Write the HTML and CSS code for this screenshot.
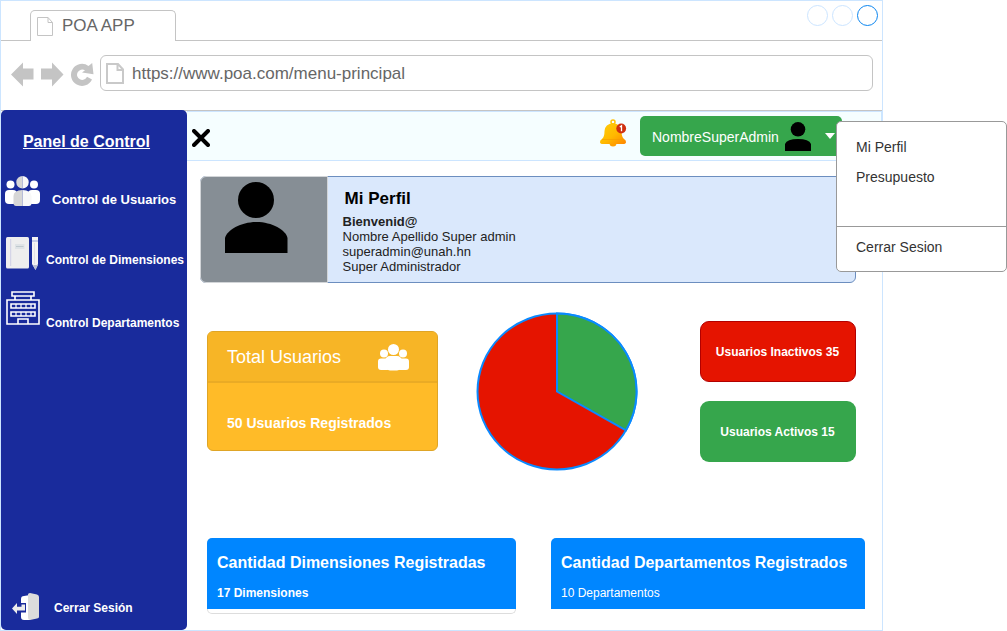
FILE: index.html
```html
<!DOCTYPE html>
<html lang="es">
<head>
<meta charset="utf-8">
<title>POA APP</title>
<link rel="stylesheet" href="styles.css">
</head>
<body>
<div class="window">
  <div class="tabstrip">
    <div class="tab">
      <svg width="16" height="19" viewBox="0 0 16 19" fill="none" stroke="#c4c4c4"><path d="M.5 .5H11L15.5 5.500V18.500H.5ZM11 .5V5.500H15.500"/></svg>
      <span class="tab-title">POA APP</span>
    </div>
    <div class="strip-rest">
      <i class="dot"></i><i class="dot"></i><i class="dot dot-active"></i>
    </div>
  </div>
  <div class="toolbar">
    <svg class="nav" width="83" height="26" viewBox="0 0 83 26" fill="#c4c4c4">
      <path d="M0 13.500 12 1.500V7.500H22.500V18.500H12V25.500Z"/>
      <path d="M52.500 13.500 41 1.500V7.500H30V18.500H41V25.500Z"/>
      <path d="M77.500 5A11 11 0 1 0 81 18.500L76 15.800A5.200 5.200 0 1 1 74 9.300L71 11.500 82.500 13.200 81.200 2Z"/>
    </svg>
    <div class="url">
      <svg width="18" height="21" viewBox="0 0 18 21" fill="none" stroke="#c9c9c9" stroke-width="2"><path d="M1 1H12L17 6.500V20H1ZM11.500 1V7H17"/></svg>
      <span class="url-text">https://www.poa.com/menu-principal</span>
    </div>
  </div>
  <div class="page">
    <nav class="sidebar">
      <h1 class="side-title">Panel de Control</h1>
      <a class="side-item users">
        <svg width="35" height="31" viewBox="0 0 35 31">
          <g fill="#fff"><circle cx="5.500" cy="8.500" r="4"/><circle cx="29" cy="8.500" r="4"/><rect y="14" width="12" height="14" rx="4"/><rect x="23" y="14" width="12" height="14" rx="4"/></g>
          <path fill="#d6d6d6" d="M17.500 0A6 6 0 0 0 17.500 12.500ZM17.500 14Q8.500 14.500 8.500 20V28Q9 30 11 30H17.500Z"/>
          <path fill="#f8f8f8" d="M17.500 0A6 6 0 0 1 17.500 12.500ZM17.500 14Q26 14.500 26.500 20V28Q26 30 24 30H17.500Z"/>
        </svg>
        <span>Control de Usuarios</span>
      </a>
      <a class="side-item dims">
        <svg width="33" height="34" viewBox="0 0 33 34">
          <rect width="23" height="31.500" rx="1.500" fill="#eee"/><path d="M4.700 2V29" stroke="#cfcfe6"/><rect x="9" y="7" width="9.500" height="5" fill="#dfe3e6"/><path d="M10 9.500H17.500" stroke="#bfc9ce"/>
          <path d="M26 0H32V27L29.500 33 26 27Z" fill="#f3f3f3"/><path d="M26 4H32" stroke="#b6bfe0" stroke-width="1.500"/><path d="M28.500 6V27" stroke="#e2e2e6"/><path d="M27 28H32L29.500 33Z" fill="#b9bfd2"/>
        </svg>
        <span>Control de Dimensiones</span>
      </a>
      <a class="side-item depts">
        <svg width="34" height="34" viewBox="0 0 34 34" fill="none" stroke="#fff" stroke-width="1.600">
          <path d="M6 1H28V5H6ZM9 5V9M25 5V9M1 9H33V33H1ZM5 13H29V17H5ZM5 21H29V25H5ZM12 33V28H22V33"/>
          <path stroke-width="1.200" d="M10 13V17M15 13V17M20 13V17M25 13V17M10 21V25M15 21V25M20 21V25M25 21V25"/>
        </svg>
        <span>Control Departamentos</span>
      </a>
      <a class="side-item logout">
        <svg width="27" height="27" viewBox="0 0 27 27">
          <path d="M9 6Q9 3 12 3L18 2V27H12Q9 27 9 24Z" fill="#fff"/>
          <path d="M16 1.500Q16 0 18 0L25 1.500Q27 2 27 4V24Q27 25 25 25.500L18 27Q16 27 16 24Z" fill="#dcdcdc"/>
          <path d="M8 10H14V19.500H8Z" fill="#192b9c"/>
          <path d="M0 15.500 5 10V13.800H9.500V11.500H13V17.500H5V21Z" fill="#ececec"/>
        </svg>
        <span>Cerrar Sesión</span>
      </a>
    </nav>
    <div class="content">
      <header class="header">
        <svg class="close" width="18" height="18" viewBox="0 0 18 18" stroke="#000" stroke-width="4" stroke-linecap="round"><path d="M2 2 16 16M16 2 2 16"/></svg>
        <svg class="bell" width="27" height="29" viewBox="0 0 27 29">
          <defs><linearGradient id="gold" x1="0" y1="0" x2="1" y2="1"><stop offset="0" stop-color="#ffce0a"/><stop offset=".55" stop-color="#ffb900"/><stop offset="1" stop-color="#ff8500"/></linearGradient></defs>
          <circle cx="13" cy="3" r="2" fill="none" stroke="#ffc107" stroke-width="1.500"/>
          <circle cx="13" cy="24" r="3.500" fill="#ffa000"/>
          <path d="M13 4Q5 5 4.500 12Q4.500 18 2 20Q0 21 0 23Q0 25 3 25H23Q26 25 26 23Q26 21 24 20Q21.500 18 21.500 12Q21 5 13 4Z" fill="url(#gold)"/>
          <path d="M2 20.500H24" stroke="#f39a00" stroke-width=".6"/>
          <circle cx="21.200" cy="9.500" r="4.900" fill="#cf2f0f"/><path d="M19.800 8 21.500 6.800V12.200" fill="none" stroke="#fff" stroke-width="1.300"/>
        </svg>
        <button class="account">
          <span class="account-name">NombreSuperAdmin</span>
          <svg width="26" height="29" viewBox="0 0 26 29"><circle cx="13" cy="7.300" r="7.300"/><path d="M0 29V22Q2 17 13 17Q24 17 26 22V29Z"/></svg>
          <i class="caret"></i>
        </button>
      </header>
      <main class="main">
        <section class="profile">
          <div class="avatar">
            <svg width="63" height="72" viewBox="0 0 63 72"><ellipse cx="31" cy="18" rx="18" ry="18"/><path d="M0 71V56C2 48 16 40 31.500 40S61 48 62.500 56V71Z"/></svg>
          </div>
          <div class="profile-text">
            <h2 class="profile-title">Mi Perfil</h2>
            <div class="welcome">Bienvenid@</div>
            <div>Nombre Apellido Super admin</div>
            <div>superadmin@unah.hn</div>
            <div>Super Administrador</div>
          </div>
        </section>
        <section class="stats">
          <div class="total">
            <div class="total-head">
              <span class="total-title">Total Usuarios</span>
              <svg width="31" height="27" viewBox="0 0 31 27" fill="#fff"><circle cx="6" cy="9.500" r="4"/><circle cx="25" cy="9.500" r="4"/><circle cx="15.500" cy="5.500" r="5.500"/><rect y="14.500" width="12" height="11.500" rx="3"/><rect x="19" y="14.500" width="12" height="11.500" rx="3"/><rect x="7" y="12" width="17" height="14.500" rx="5"/></svg>
            </div>
            <div class="total-body"><b>50 Usuarios Registrados</b></div>
          </div>
          <svg class="pie" width="162" height="160" viewBox="0 0 162 160" stroke="#0a8aff" stroke-width="2">
            <ellipse cx="81" cy="79.500" rx="79.500" ry="78" fill="#e51400"/>
            <path d="M81 79.500V1.500A79.500 78 0 0 1 150 118.300Z" fill="#36a64c"/>
          </svg>
          <div class="status">
            <div class="pill inactive">Usuarios Inactivos 35</div>
            <div class="pill active">Usuarios Activos 15</div>
          </div>
        </section>
        <section class="counts">
          <div class="count-wrap outlined">
            <div class="count"><h3>Cantidad Dimensiones Registradas</h3><b>17 Dimensiones</b></div>
          </div>
          <div class="count-wrap wide">
            <div class="count"><h3>Cantidad Departamentos Registrados</h3><span>10 Departamentos</span></div>
          </div>
        </section>
      </main>
    </div>
  </div>
</div>
<div class="menu">
  <div class="menu-main"><a>Mi Perfil</a><a>Presupuesto</a></div>
  <div class="menu-end"><a>Cerrar Sesion</a></div>
</div>
</body>
</html>
```
FILE: styles.css
```css
* { box-sizing: border-box; }
body { margin: 0; background: #fff; font-family: "Liberation Sans", Arial, sans-serif; overflow: hidden; position: relative; height: 631px; }
h1, h2, h3 { margin: 0; }
svg { display: block; flex: none; }
span, a, b, h1, h2, h3 { white-space: nowrap; }

.window { width: 883px; height: 631px; border: 1px solid #cce5ff; display: flex; flex-direction: column; }
.tabstrip { display: flex; height: 40px; }
.tabstrip::before { content: ""; width: 29px; border-bottom: 1px solid #c4c4c4; }
.tab { width: 146px; margin-top: 9px; padding: 6px 0 0 6px; display: flex; gap: 9px; border: 1px solid #c4c4c4; border-bottom: 0; border-radius: 5px 5px 0 0; }
.tab-title { font-size: 17px; line-height: 18px; color: #666; }
.strip-rest { flex: 1; display: flex; justify-content: flex-end; gap: 4px; padding: 4px 4px 0 0; border-bottom: 1px solid #c4c4c4; }
.dot { width: 21px; height: 21px; border: 1px solid #cce5ff; border-radius: 50%; }
.dot-active { border-color: #0a85f0; }

.toolbar { display: flex; height: 70px; padding: 14px 9px 0 10px; border-bottom: 1px solid #c4c4c4; }
.nav { margin: 6px 6px 0 0; }
.url { flex: 1; height: 36px; border: 1px solid #c4c4c4; border-radius: 6px; display: flex; align-items: center; gap: 8px; padding-left: 5px; }
.url-text { font-size: 17px; color: #666; padding-top: 2px; }

.page { flex: 1; display: flex; min-height: 0; }
.sidebar { width: 186px; margin-top: -1px; background: #192b9c; border-radius: 5px; color: #fff; display: flex; flex-direction: column; position: relative; }
.side-title { font-size: 16px; line-height: 18px; text-decoration: underline; text-align: center; margin-top: 23px; padding-right: 15px; }
.side-item { display: flex; font-size: 12px; font-weight: bold; line-height: 16px; padding-left: 5px; }
.side-item span { align-self: flex-end; }
.users { font-size: 13px; padding-left: 4px; margin-top: 25px; gap: 12px; height: 32px; }
.dims { margin-top: 29px; gap: 7px; height: 34px; }
.dims span { margin-bottom: 3px; }
.depts { margin-top: 20px; gap: 6px; height: 40px; }
.logout { margin: auto 0 10px; padding-left: 11px; gap: 15px; }
.logout span { margin-bottom: 4px; }

.content { flex: 1; min-width: 0; }
.header { height: 50px; background: #f5feff; border: 1px solid #cce5ff; border-left: 0; display: flex; padding: 4px 39px 0 5px; }
.close { margin-top: 13px; }
.bell { margin: 3px 13px 0 auto; }
.account { width: 202px; height: 40px; border: 0; border-radius: 5px; background: #36a64c; color: #fff; font: 14px "Liberation Sans", Arial, sans-serif; display: flex; align-items: center; padding: 0 0 0 12px; }
.account-name { padding-top: 2px; }
.account svg { margin: 0 14px 0 6px; fill: #000; }
.caret { border: 5px solid transparent; border-top: 6px solid #fff; border-bottom: 0; }

.main { padding: 15px 0 0 13px; }
.profile { width: 656px; height: 107px; display: flex; background: #dae8fc; border: 1px solid #6c8ebf; border-radius: 6px; }
.avatar { width: 128px; margin: -1px 0 -1px -1px; background: #868e95; border: 1px solid #d2d5d8; border-radius: 6px 0 0 6px; padding: 5px 0 0 24px; }
.profile-text { padding: 12px 0 0 14.500px; font-size: 13px; line-height: 15px; color: #222; letter-spacing: .02px; }
.profile-title { font-size: 17px; line-height: 20px; margin: 0 0 5px 2px; color: #000; }
.welcome { font-weight: bold; margin-bottom: 0; }

.stats { display: flex; margin: 29px 0 0 7px; height: 160px; }
.total { width: 231px; height: 120px; margin: 19px 38px 0 0; background: #ffbb28; border: 1px solid #dfa526; border-radius: 6px; color: #fff; overflow: hidden; }
.total-head { display: flex; justify-content: space-between; align-items: center; height: 51px; padding: 1px 28px 0 19px; background: #f7b526; border-bottom: 2px solid #eaab25; font-size: 18px; }
.total-title { padding-top: 1px; }
.total-body { padding: 30px 0 0 19px; font-size: 14px; line-height: 20px; }
.status { margin: 9px 0 0 62px; display: flex; flex-direction: column; gap: 19px; }
.pill { width: 156px; height: 61px; border-radius: 9px; display: grid; place-items: center; color: #fff; font-size: 12px; font-weight: bold; white-space: nowrap; padding-right: 1px; }
.inactive { background: #e51400; border: 1px solid #b20000; }
.active { background: #36a64c; }

.counts { display: flex; gap: 35px; margin: 66px 0 0 7px; }
.count-wrap { width: 309px; height: 76px; border-radius: 5px; }
.wide { width: 314px; }
.outlined { border: 1px solid #ddd; border-top: 0; }
.outlined .count { margin: 0 -1px; }
.count { height: 71px; background: #0086ff; color: #fff; border-radius: 5px 5px 0 0; padding: 15px 10px 0; font-size: 12px; }
.count h3 { font-size: 16px; line-height: 20px; margin-bottom: 13px; }
.count b, .count span { display: block; line-height: 14px; }

.menu { position: absolute; left: 836px; top: 121px; width: 171px; height: 151px; background: #fff; border: 1px solid #999; border-radius: 5px; font-size: 14px; line-height: 30px; color: #333; }
.menu a { display: block; padding-left: 19px; }
.menu-main { height: 105px; padding-top: 10px; border-bottom: 1px solid #999; }
.menu-end { padding-top: 5px; }
```
